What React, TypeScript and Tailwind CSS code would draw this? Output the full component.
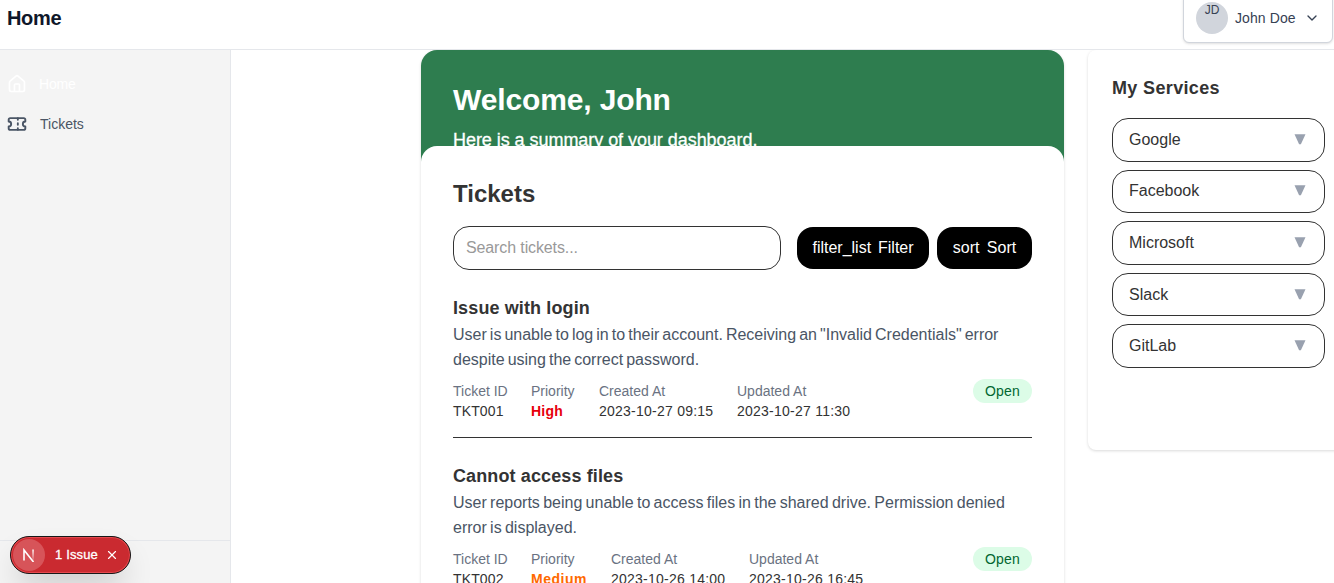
import React from "react";
import { House, ChevronDown, X } from "lucide-react";

type Ticket = {
  id: string;
  title: string;
  description: string;
  spacingClass: string;
  priority: string;
  priorityClass: string;
  priorityWidth: string;
  created: string;
  updated: string;
  status: string;
};

const tickets: Ticket[] = [
  {
    id: "TKT001",
    title: "Issue with login",
    description:
      'User is unable to log in to their account. Receiving an "Invalid Credentials" error despite using the correct password.',
    spacingClass: "[word-spacing:-1.4px]",
    priority: "High",
    priorityClass: "text-[#e7000b] tracking-[0.24px]",
    priorityWidth: "w-11",
    created: "2023-10-27 09:15",
    updated: "2023-10-27 11:30",
    status: "Open",
  },
  {
    id: "TKT002",
    title: "Cannot access files",
    description:
      "User reports being unable to access files in the shared drive. Permission denied error is displayed.",
    spacingClass: "[word-spacing:-1.15px]",
    priority: "Medium",
    priorityClass: "text-[#ff6900] tracking-[0.5px]",
    priorityWidth: "w-14",
    created: "2023-10-26 14:00",
    updated: "2023-10-26 16:45",
    status: "Open",
  },
];

const services = ["Google", "Facebook", "Microsoft", "Slack", "GitLab"];

function TicketIcon() {
  return (
    <svg width="20" height="20" viewBox="0 0 24 24" fill="none" stroke="currentColor" strokeWidth="2.25" strokeLinecap="round" strokeLinejoin="round">
      <path d="M2 9a3 3 0 0 1 0 6v2a2 2 0 0 0 2 2h16a2 2 0 0 0 2-2v-2a3 3 0 0 1 0-6V7a2 2 0 0 0-2-2H4a2 2 0 0 0-2 2Z" />
      <path d="M13 5v2M13 17v2M13 11v2" />
    </svg>
  );
}

function Header() {
  return (
    <header className="h-[50px] shrink-0 border-b border-[#e5e7eb] bg-white">
      <div className="flex h-9 items-center justify-between pl-[7px] pr-px">
        <h1 className="text-[20px] font-bold leading-7 tracking-[-0.35px] text-[#0f172a]">Home</h1>
        <button className="flex h-[50px] w-[150px] shrink-0 items-center rounded-md border border-[#d1d5dc] bg-white pl-3 text-sm text-[#364153] shadow-sm">
          <span className="flex h-8 w-8 shrink-0 justify-center rounded-full bg-[#d1d5dc] text-xs leading-4">JD</span>
          <span className="ml-[7px] whitespace-nowrap tracking-[0.1px]">John Doe</span>
          <ChevronDown className="ml-2 h-4 w-4" />
        </button>
      </div>
    </header>
  );
}

function Sidebar() {
  return (
    <aside className="flex w-[231px] shrink-0 flex-col justify-between border-r border-[#e5e7eb] bg-[#f4f4f4]">
      <nav className="flex flex-col gap-5 pl-[7px] pt-6 text-sm">
        <a className="flex h-5 items-center gap-3 text-white">
          <House size={20} strokeWidth={2} />
          <span className="tracking-[-0.2px]">Home</span>
        </a>
        <a className="flex h-5 items-center gap-3 text-[#4a5565]">
          <TicketIcon />
          <span className="pl-px">Tickets</span>
        </a>
      </nav>
      <div className="h-[43px] border-t border-[#e5e7eb]" />
    </aside>
  );
}

function Field({ label, value, width, valueClass }: { label: string; value: string; width: string; valueClass: string }) {
  return (
    <div className={"shrink-0 whitespace-nowrap text-sm leading-5 " + width}>
      <div className="text-[#6a7282]">{label}</div>
      <div className={valueClass}>{value}</div>
    </div>
  );
}

function TicketCard({ t }: { t: Ticket }) {
  return (
    <article className="h-[144px] shrink-0 border-b border-[#333]">
      <h3 className="text-[18px] font-bold leading-7 tracking-[0.12px] text-[#333]">{t.title}</h3>
      <p className={"text-base leading-[25px] text-[#4a5565] " + t.spacingClass}>{t.description}</p>
      <div className="mt-[7px] flex items-start justify-between">
        <div className="flex gap-6 pt-0.5">
          <Field label="Ticket ID" value={t.id} width="w-[54px]" valueClass="text-[#333] tracking-[0.14px]" />
          <Field label="Priority" value={t.priority} width={t.priorityWidth} valueClass={"font-bold " + t.priorityClass} />
          <Field label="Created At" value={t.created} width="w-[114px]" valueClass="text-[#333] tracking-[0.24px]" />
          <Field label="Updated At" value={t.updated} width="w-[114px]" valueClass="text-[#333] tracking-[0.24px]" />
        </div>
        <span className="h-6 w-[59px] rounded-full bg-[#dcfce7] text-center text-sm leading-6 tracking-[0.14px] text-[#016630]">{t.status}</span>
      </div>
    </article>
  );
}

function Dashboard() {
  return (
    <section className="h-[700px] w-[643px] shrink-0 rounded-2xl bg-[#2e7d4f] shadow-[0_1px_3px_rgba(0,0,0,0.15)]">
      <div className="h-24 px-8 pt-8 text-white">
        <h2 className="text-[30px] font-bold leading-9 tracking-[-0.13px]">Welcome, John</h2>
        <p className="mt-2 text-[18px] leading-7 tracking-[-0.05px] [-webkit-text-stroke:0.3px_white]">Here is a summary of your dashboard.</p>
      </div>
      <div className="relative h-[604px] rounded-2xl bg-white px-8 pt-8">
        <h2 className="text-2xl font-bold leading-8 text-[#333]">Tickets</h2>
        <div className="mt-4 flex items-center">
          <input
            placeholder="Search tickets..."
            className="h-11 w-[328px] rounded-2xl border border-[#333] px-3 text-base tracking-[-0.12px] placeholder:text-[#999]"
          />
          <button className="ml-4 h-[42px] w-[132px] whitespace-pre rounded-2xl bg-black text-base text-white [word-spacing:-1px]">filter_list  Filter</button>
          <button className="ml-2 h-[42px] w-[95px] whitespace-pre rounded-2xl bg-black text-base text-white [word-spacing:-0.8px]">sort  Sort</button>
        </div>
        <div className="mt-6 flex flex-col gap-6">
          {tickets.map((t) => (
            <TicketCard key={t.id} t={t} />
          ))}
        </div>
      </div>
    </section>
  );
}

function Services() {
  return (
    <section className="ml-6 h-[400px] w-[261px] shrink-0 rounded-lg bg-white px-6 pt-6 shadow-[0_1px_3px_rgba(0,0,0,0.15)]">
      <h2 className="text-[18px] font-bold leading-7 tracking-[0.35px] text-[#333]">My Services</h2>
      <ul className="mt-4 flex flex-col gap-2">
        {services.map((s) => (
          <li key={s} className="flex h-[43.6px] items-center justify-between rounded-2xl border border-[#333] px-4 text-base text-[#333]">
            <span>{s}</span>
            <svg width="16" height="12" viewBox="0 0 16 12" className="text-[#99a1af]">
              <path d="M2.5 0.3h11L8.9 10.3H7.1z" fill="currentColor" />
            </svg>
          </li>
        ))}
      </ul>
    </section>
  );
}

function IssueBadge() {
  return (
    <div className="absolute left-[10px] top-[536px] flex h-[38px] w-[121px] items-center rounded-full border border-[#171717] bg-[#ca2a30] pl-0.5 text-white shadow-[inset_0_0_0_1px_#e5484d,0_16px_32px_-8px_rgba(0,0,0,0.24)]">
      <span className="flex h-8 w-8 items-center justify-center rounded-full bg-[#d75459]">
        <svg width="14" height="14" viewBox="0 0 14 14" fill="none">
          <defs>
            <linearGradient id="stem" x1="0" y1="0" x2="0" y2="1">
              <stop stopColor="#fff" />
              <stop offset="0.9" stopColor="#fff" stopOpacity="0.2" />
            </linearGradient>
          </defs>
          <path d="M2 12.5V2L11.5 14" stroke="#fff" strokeWidth="1.6" />
          <rect x="10.3" y="1.5" width="1.5" height="11" fill="url(#stem)" />
        </svg>
      </span>
      <span className="ml-[10px] whitespace-nowrap text-[13px] font-medium leading-4 tracking-[0.15px] [-webkit-text-stroke:0.3px_white]">1 Issue</span>
      <X className="ml-[7px] h-3.5 w-3.5" strokeWidth={2} />
    </div>
  );
}

export default function App() {
  return (
    <div className="relative flex h-[583px] w-[1334px] flex-col overflow-hidden bg-white font-['Liberation_Sans',Arial,sans-serif]">
      <Header />
      <div className="flex min-h-0 flex-1">
        <Sidebar />
        <main className="flex min-w-0 flex-1 items-start overflow-hidden pl-[190px]">
          <Dashboard />
          <Services />
        </main>
      </div>
      <IssueBadge />
    </div>
  );
}
